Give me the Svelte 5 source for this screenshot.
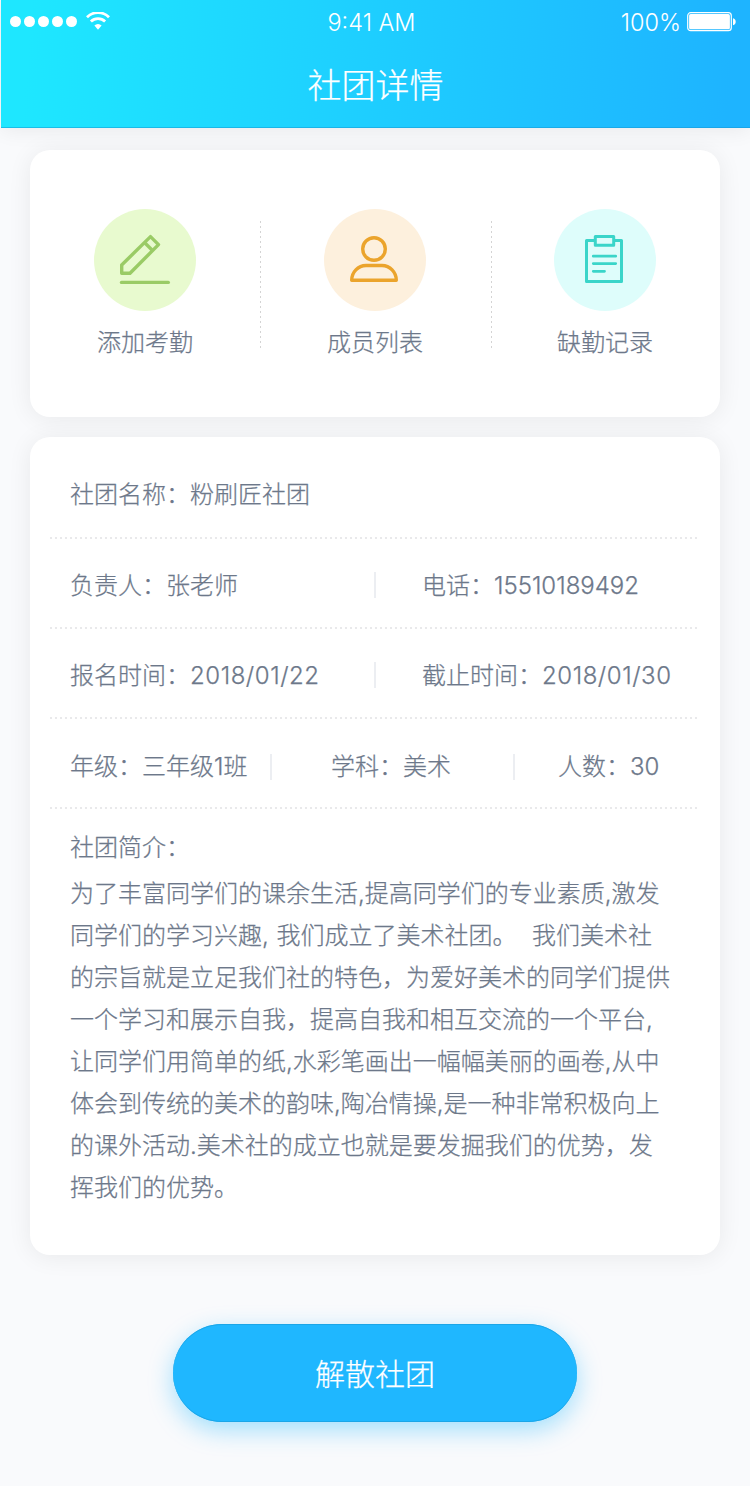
<script lang="ts">
    const actions = [
        { icon: 'edit', label: '添加考勤' },
        { icon: 'member', label: '成员列表' },
        { icon: 'record', label: '缺勤记录' },
    ];

    const rows = [
        { kind: 'single', items: [['社团名称', '粉刷匠社团']] },
        { kind: 'double', items: [['负责人', '张老师'], ['电话', '15510189492']] },
        { kind: 'double', items: [['报名时间', '2018/01/22'], ['截止时间', '2018/01/30']] },
        { kind: 'triple', items: [['年级', '三年级1班'], ['学科', '美术'], ['人数', '30']] },
    ];

    const intro = [
        '为了丰富同学们的课余生活,提高同学们的专业素质,激发',
        '同学们的学习兴趣, 我们成立了美术社团。  我们美术社',
        '的宗旨就是立足我们社的特色，为爱好美术的同学们提供',
        '一个学习和展示自我，提高自我和相互交流的一个平台,',
        '让同学们用简单的纸,水彩笔画出一幅幅美丽的画卷,从中',
        '体会到传统的美术的韵味,陶冶情操,是一种非常积极向上',
        '的课外活动.美术社的成立也就是要发掘我们的优势，发',
        '挥我们的优势。',
    ];
</script>

<div class="page">
    <header class="header">
        <div class="status-bar">
            <div class="status-left">
                <div class="signal">
                    {#each Array(5) as _}
                        <span class="signal-dot"></span>
                    {/each}
                </div>
                <svg class="wifi" width="24" height="18" viewBox="0 0 24 18" fill="none">
                    <path d="M1 5.2a15.6 15.6 0 0 1 22 0" stroke="#fff" stroke-width="2.8" />
                    <path d="M4.9 9.6a10.1 10.1 0 0 1 14.2 0" stroke="#fff" stroke-width="2.8" />
                    <path d="M8.4 13.6a5 5 0 0 1 7.2 0L12 17.8z" fill="#fff" />
                </svg>
            </div>
            <span class="time">9:41 AM</span>
            <div class="status-right">
                <span>100%</span>
                <svg width="50" height="20" viewBox="0 0 50 20" fill="none">
                    <rect x="0.7" y="0.7" width="43.6" height="18" rx="3" stroke="#fff" stroke-width="1.2" />
                    <rect x="2.1" y="2.1" width="40.8" height="15.2" rx="1.6" fill="#fff" />
                    <path d="M46 6.2c3.6.8 3.6 6.2 0 7z" fill="#fff" />
                </svg>
            </div>
        </div>
        <h1>社团详情</h1>
    </header>

    <section class="card actions">
        {#each actions as action}
            <button class="action">
                <span class="badge {action.icon}">
                    <svg width="102" height="102" viewBox="0 0 102 102" fill="none" stroke="currentColor">
                        {#if action.icon === 'edit'}
                            <path d="M27.7 64.3V56L56.5 27.6l8 8L36 64.3z" stroke-width="3.4" stroke-linejoin="round" />
                            <path d="M50.5 33.5l8 8" stroke-width="3.4" />
                            <path d="M27.5 73.4h46.8" stroke-width="3.4" stroke-linecap="round" />
                        {:else if action.icon === 'member'}
                            <circle cx="50" cy="40" r="11.3" stroke-width="3.4" />
                            <path d="M27.7 71.3c0-8 6.3-14.8 14.3-14.8h16c8 0 14.3 6.8 14.3 14.8z" stroke-width="3.4" stroke-linejoin="round" />
                        {:else}
                            <path d="M41 31.5h-8.5v41h35v-41H60" stroke-width="3" stroke-linejoin="round" />
                            <rect x="41.3" y="27.5" width="18.4" height="8.8" stroke-width="3" stroke-linejoin="round" />
                            <path d="M39.3 47.2h22.4M39.3 54.6h22.4M39.3 62.3h11.2" stroke-width="2.8" stroke-linecap="round" />
                        {/if}
                    </svg>
                </span>
                <span class="action-label">{action.label}</span>
            </button>
        {/each}
    </section>

    <section class="card detail">
        {#each rows as row}
            <div class="row {row.kind}">
                {#each row.items as [label, value]}
                    <div class="cell">{label}：<span class:date={value.includes('/')}>{value}</span></div>
                {/each}
            </div>
        {/each}
        <div class="intro">
            <h2>社团简介：</h2>
            {#each intro as line}
                <p>{line}</p>
            {/each}
        </div>
    </section>

    <button class="dismiss">解散社团</button>
</div>

<style>
    :global(body) {
        background: #f9fafc;
    }

    .page {
        width: 750px;
        height: 1486px;
        box-sizing: border-box;
        overflow: hidden;
        display: flex;
        flex-direction: column;
        align-items: center;
        background: #f9fafc;
        color: #6d788a;
        font-family: Inter, 'Noto Sans CJK SC', sans-serif;
        font-weight: 300;
        font-size: 24px;
        -webkit-text-stroke: 0.25px currentColor;
    }

    button {
        padding: 0;
        border: none;
        background: none;
        font: inherit;
        color: inherit;
    }

    .header {
        width: 749px;
        height: 128px;
        box-sizing: border-box;
        margin-left: 1px;
        flex-shrink: 0;
        color: #fff;
        background: linear-gradient(94deg, #1ee7ff 4%, #1eb4ff 97%);
        border-bottom: 1px solid rgba(20, 150, 210, 0.5);
        box-shadow: 0 2px 20px rgba(0, 0, 0, 0.07);
    }

    .status-bar {
        height: 44px;
        padding: 0 13px 0 9px;
        display: grid;
        grid-template-columns: 1fr auto 1fr;
        align-items: center;
        font-size: 23.5px;
        -webkit-text-stroke: 0;
    }

    .status-left,
    .status-right {
        display: flex;
        align-items: center;
    }

    .status-left {
        gap: 9px;
        padding-bottom: 2px;
    }

    .status-right {
        justify-content: flex-end;
        gap: 6px;
    }

    .signal {
        display: flex;
        gap: 3px;
    }

    .signal-dot {
        width: 11px;
        height: 11px;
        border-radius: 50%;
        background: #fff;
    }

    .time {
        padding-right: 4px;
    }

    h1 {
        margin: 16px 0 0;
        font-size: 34px;
        line-height: 52px;
        font-weight: 300;
        text-align: center;
    }

    .card {
        width: 690px;
        box-sizing: border-box;
        flex-shrink: 0;
        background: #fff;
        border-radius: 20px;
        box-shadow: 0 2px 24px rgba(0, 0, 0, 0.07);
    }

    .actions {
        height: 267px;
        margin-top: 22px;
        padding-top: 59px;
        display: grid;
        grid-template-columns: repeat(3, 230px);
        align-items: start;
    }

    .action {
        height: 150px;
        display: flex;
        flex-direction: column;
        align-items: center;
    }

    /* dashed separator between the shortcuts */
    .action + .action {
        background: repeating-linear-gradient(#d4d4d4 0 2px, transparent 2px 5px) 0 12px / 1px 130px no-repeat;
    }

    .action:last-child {
        background-position-x: 1px;
    }

    .badge {
        width: 102px;
        height: 102px;
        border-radius: 50%;
    }

    .badge svg {
        display: block;
    }

    .badge.edit {
        background: #e8facf;
        color: #9acb66;
    }

    .badge.member {
        background: #fdf0dd;
        color: #eba42c;
    }

    .badge.record {
        background: #defdfb;
        color: #3ad5c9;
    }

    .action-label {
        margin-top: 14px;
        line-height: 36px;
    }

    .detail {
        height: 818px;
        margin-top: 20px;
    }

    .row {
        height: 90px;
        box-sizing: border-box;
        margin: 0 22px 0 20px;
        padding: 2px 0 0 20px;
        display: grid;
        align-items: center;
        background: repeating-linear-gradient(90deg, #e9e9eb 0 2px, transparent 2px 5px) 0 100% / 100% 2px no-repeat;
    }

    .row.single {
        height: 102px;
        padding-top: 14px;
    }

    .row.double {
        grid-template-columns: 304px 1fr;
    }

    .row.triple {
        grid-template-columns: 200px 243px 1fr;
        padding-top: 6px;
    }

    .cell {
        height: 26px;
        line-height: 28px;
        white-space: nowrap;
    }

    .single .cell,
    .triple .cell {
        line-height: 26px;
    }

    .cell + .cell {
        border-left: 2px solid #eceef2;
        padding-left: 46px;
    }

    .triple .cell + .cell {
        padding-left: 59px;
    }

    .triple .cell:last-child {
        padding-left: 43px;
    }

    .date {
        letter-spacing: 0.55px;
    }

    .intro {
        padding: 18px 40px 0;
    }

    h2 {
        margin: 0 0 4px;
        font-size: 24px;
        font-weight: 300;
        line-height: 42px;
    }

    .intro p {
        margin: 0;
        line-height: 42px;
        white-space: pre;
        word-spacing: 1px;
    }

    .dismiss {
        width: 404px;
        height: 98px;
        margin-top: 69px;
        padding-bottom: 2px;
        flex-shrink: 0;
        border-radius: 49px;
        background: #1fb7ff;
        color: #fff;
        font-size: 30px;
        box-shadow: inset 0 1px 0 #1ba6e8, inset 0 -1px 0 #1ba6e8, 0 8px 24px rgba(31, 183, 255, 0.4);
    }
</style>
